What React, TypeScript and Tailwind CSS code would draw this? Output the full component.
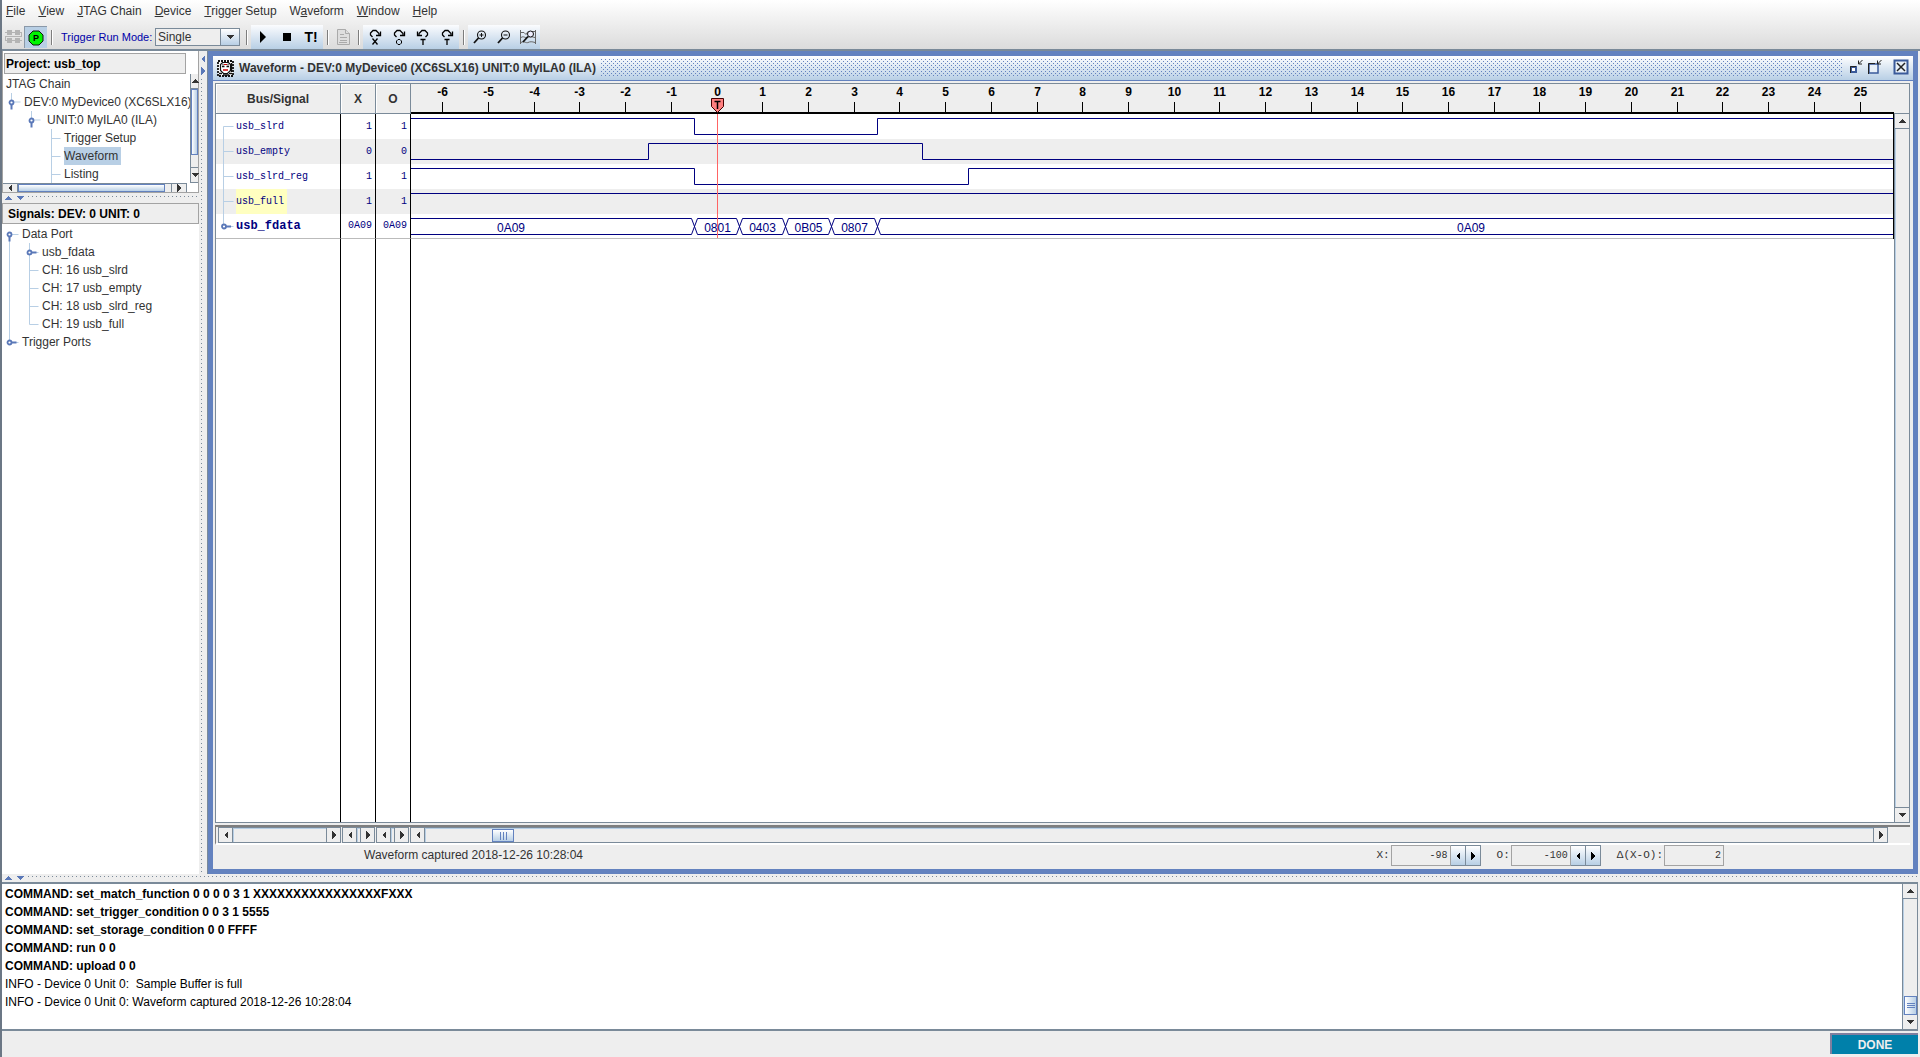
import type { ReactNode } from "react";

type Dir = "up" | "down" | "left" | "right";

const MENUS = [
  ["", "F", "ile"],
  ["", "V", "iew"],
  ["", "J", "TAG Chain"],
  ["", "D", "evice"],
  ["", "T", "rigger Setup"],
  ["W", "a", "veform"],
  ["", "W", "indow"],
  ["", "H", "elp"],
];

const SIGNALS = [
  { name: "usb_slrd", x: "1", o: "1" },
  { name: "usb_empty", x: "0", o: "0" },
  { name: "usb_slrd_reg", x: "1", o: "1" },
  { name: "usb_full", x: "1", o: "1" },
  { name: "usb_fdata", x: "0A09", o: "0A09" },
];

const COMMANDS = [
  "COMMAND: set_match_function 0 0 0 0 3 1 XXXXXXXXXXXXXXXXFXXX",
  "COMMAND: set_trigger_condition 0 0 3 1 5555",
  "COMMAND: set_storage_condition 0 0 FFFF",
  "COMMAND: run 0 0",
  "COMMAND: upload 0 0",
];

const INFOS = [
  "INFO - Device 0 Unit 0:  Sample Buffer is full",
  "INFO - Device 0 Unit 0: Waveform captured 2018-12-26 10:28:04",
];

const ARROWS: Record<Dir, string> = {
  up: "M0 6h8L4 2z",
  down: "M0 2h8L4 6z",
  left: "M6 0v8L2 4z",
  right: "M2 0v8l4-4z",
};

function Arrow({ dir, fill = "#333" }: { dir: Dir; fill?: string }) {
  return (
    <svg width="8" height="8" viewBox="0 0 8 8" className="shrink-0" shapeRendering="crispEdges">
      <path d={ARROWS[dir]} fill={fill} />
    </svg>
  );
}

/* ---------- scroll bars ---------- */

function ScrollButton({ dir, className }: { dir: Dir; className: string }) {
  return (
    <button
      aria-label={`Scroll ${dir}`}
      className={`flex shrink-0 items-center justify-center border-[#7a8a99] bg-[#eee] ${className}`}
    >
      <Arrow dir={dir} />
    </button>
  );
}

function HScroll({ className, children }: { className: string; children?: ReactNode }) {
  return (
    <div className={`flex h-4 border border-[#7a8a99] bg-[#eee] ${className}`}>
      <ScrollButton dir="left" className="w-[14px] border-r" />
      <div className="flex min-w-0 flex-1 border-l border-t border-[#b8cfe5]">{children}</div>
      <ScrollButton dir="right" className="w-[14px] border-l" />
    </div>
  );
}

/* ---------- tool bar ---------- */

function ToolSep() {
  return <div className="mx-1 h-[15px] w-px shrink-0 bg-[#7d7d7d] shadow-[1px_0_0_#fff]" />;
}

function ToolButton({ label, children }: { label: string; children: ReactNode }) {
  return (
    <button aria-label={label} className="flex h-6 w-6 items-center justify-center">
      {children}
    </button>
  );
}

function ToolGroup({ children }: { children: ReactNode }) {
  return (
    <div className="flex h-6 bg-gradient-to-b from-[#fbfcfe] to-[#b8cfe5]">{children}</div>
  );
}

function JumpIcon({ mark, flip }: { mark: "x" | "o" | "t"; flip?: boolean }) {
  return (
    <svg width="16" height="16" viewBox="0 0 16 16" fill="none" stroke="#000">
      <g transform={flip ? "matrix(-1 0 0 1 16 0)" : undefined}>
        <path d="M5.500 8L3.500 6V4L6 1.500h3L12 4.500V6" strokeWidth="1.300" />
        <path d="M13.500 2.500v4h-4.500" strokeWidth="1.300" />
      </g>
      {mark === "x" && <path d="M5.500 9.500l5 6M10.500 9.500l-5 6" strokeWidth="1.300" />}
      {mark === "o" && <path d="M7 10.500h2l1.500 1.500v2L9 15.500H7L5.500 14v-2z" />}
      {mark === "t" && <path d="M5.500 10.500h5M8 10.500V16" strokeWidth="1.300" />}
    </svg>
  );
}

function ZoomIcon({ plus }: { plus?: boolean }) {
  return (
    <svg width="14" height="14" viewBox="0 0 14 14" fill="none" stroke="#111">
      <circle cx="8.500" cy="5" r="4" strokeWidth="1.100" />
      <path d="M5.500 8L1 13" strokeWidth="1.800" />
      <path d={plus ? "M6.500 5h4M8.500 3v4" : "M6.500 5h4"} />
    </svg>
  );
}

function ToolBar() {
  return (
    <div className="flex h-[26px] items-start border-b-2 border-[#7a8a99]">
      <button aria-label="Open cable" className="flex h-6 w-[22px] items-center justify-center" disabled>
        <svg width="17" height="14" viewBox="0 0 17 14" fill="#b4b4b4">
          <path d="M2 0h5v5H2zM10 0h5v5h-5zM2 8h5v5H2zM10 8h5v5h-5zM0 2h17v1H0zM0 10h17v1H0zM16 2h1v5h-1zM0 6h17v1H0zM0 6h1v5H0z" />
        </svg>
      </button>
      <button
        aria-label="Poll"
        className="mt-px flex h-[22px] w-[23px] items-center justify-center border-l border-t border-[#8a98a8] bg-[#b8cfe5]"
      >
        <svg width="16" height="16" viewBox="0 0 16 16">
          <path d="M5 1h6l4 4v6l-4 4H5l-4-4V5z" fill="#00f500" stroke="#111" />
          <text x="8" y="11" textAnchor="middle" className="text-[9px] font-bold">P</text>
        </svg>
      </button>
      <div className="flex h-6 items-center">
        <ToolSep />
      </div>
      <div className="flex h-6 w-[186px] items-center">
        <label htmlFor="run-mode" className="w-[95px] whitespace-nowrap pl-[5px] text-[11px] text-[#0000aa]">
          Trigger Run Mode:
        </label>
        <div className="relative ml-1 h-[18px] w-[85px]">
          <select
            id="run-mode"
            className="block h-[18px] w-full appearance-none border border-[#7a8a99] bg-[#eee] pl-0.5 text-xs leading-4 outline-none"
          >
            <option>Single</option>
          </select>
          <span className="pointer-events-none absolute inset-y-0 right-0 flex w-5 items-center justify-center border border-[#7a8a99] bg-gradient-to-b from-white to-[#b8cfe5]">
            <Arrow dir="down" />
          </span>
        </div>
      </div>
      <div className="flex h-6 items-center">
        <ToolSep />
      </div>
      <ToolGroup>
        <ToolButton label="Run">
          <svg width="8" height="12" viewBox="0 0 8 12">
            <path d="M1 0l6 6-6 6z" fill="#000" />
          </svg>
        </ToolButton>
        <ToolButton label="Stop">
          <svg width="8" height="8" viewBox="0 0 8 8">
            <path d="M0 0h8v8H0z" fill="#000" />
          </svg>
        </ToolButton>
        <ToolButton label="Trigger immediate">
          <span className="text-sm font-bold text-black">T!</span>
        </ToolButton>
      </ToolGroup>
      <div className="flex h-6 items-center">
        <ToolSep />
        <button aria-label="Report" className="flex h-6 w-[22px] items-center justify-center" disabled>
          <svg width="13" height="16" viewBox="0 0 13 16" fill="#dedede" stroke="#aaa">
            <path d="M.5.5h8l4 4v11H.5z" />
            <path d="M8.500.5v4h4M3 5.500h4M3 8.500h7M3 11.500h7M2 13.500h8" />
          </svg>
        </button>
        <ToolSep />
      </div>
      <ToolGroup>
        <ToolButton label="Go to X marker">
          <JumpIcon mark="x" />
        </ToolButton>
        <ToolButton label="Go to O marker">
          <JumpIcon mark="o" />
        </ToolButton>
        <ToolButton label="Previous trigger">
          <JumpIcon mark="t" flip />
        </ToolButton>
        <ToolButton label="Next trigger">
          <JumpIcon mark="t" />
        </ToolButton>
      </ToolGroup>
      <div className="flex h-6 items-center">
        <ToolSep />
      </div>
      <ToolGroup>
        <ToolButton label="Zoom in">
          <ZoomIcon plus />
        </ToolButton>
        <ToolButton label="Zoom out">
          <ZoomIcon />
        </ToolButton>
        <ToolButton label="Zoom fit">
          <svg width="16" height="14" viewBox="0 0 16 14" fill="none" stroke="#666">
            <path d="M.5 0v14M15.500 0v14M1 2.500h3l2 2 2-3M1 7.500c3-2 4 1 6 0s4-1 8 0M1 12.500c3-2 5 1 7 0s4-1 7 0M12 1.500h3" />
            <circle cx="10.500" cy="4" r="3" fill="#eef" stroke="#111" />
            <path d="M8 6.500L3 12" stroke="#111" strokeWidth="1.800" />
          </svg>
        </ToolButton>
      </ToolGroup>
    </div>
  );
}

/* ---------- trees ---------- */

interface Node {
  label: string;
  gutter: string;
  lines: string;
  knob?: { x: number; open: boolean };
  selected?: boolean;
}

const PROJECT_TREE: Node[] = [
  { label: "JTAG Chain", gutter: "w-[3px]", lines: "" },
  { label: "DEV:0 MyDevice0 (XC6SLX16)", gutter: "w-[21px]", lines: "M8.500 0v9h9", knob: { x: 8.5, open: true } },
  { label: "UNIT:0 MyILA0 (ILA)", gutter: "w-[44px]", lines: "M28.500 0v9h9", knob: { x: 28.5, open: true } },
  { label: "Trigger Setup", gutter: "w-[61px]", lines: "M48.500 0v18M48.500 9.500h9" },
  { label: "Waveform", gutter: "w-[61px]", lines: "M48.500 0v18M48.500 9.500h9", selected: true },
  { label: "Listing", gutter: "w-[61px]", lines: "M48.500 0v18M48.500 9.500h9" },
];

const SIGNAL_TREE: Node[] = [
  { label: "Data Port", gutter: "w-5", lines: "M7.500 9v9M7.500 9.500h9", knob: { x: 7.5, open: true } },
  { label: "usb_fdata", gutter: "w-10", lines: "M7.500 0v18M27.500 0v18M27.500 9.500h9", knob: { x: 27.5, open: false } },
  { label: "CH: 16 usb_slrd", gutter: "w-10", lines: "M7.500 0v18M27.500 0v18M27.500 9.500h9" },
  { label: "CH: 17 usb_empty", gutter: "w-10", lines: "M7.500 0v18M27.500 0v18M27.500 9.500h9" },
  { label: "CH: 18 usb_slrd_reg", gutter: "w-10", lines: "M7.500 0v18M27.500 0v18M27.500 9.500h9" },
  { label: "CH: 19 usb_full", gutter: "w-10", lines: "M7.500 0v18M27.500 0v9.500h9" },
  { label: "Trigger Ports", gutter: "w-5", lines: "M7.500 0v9.500h9", knob: { x: 7.5, open: false } },
];

function Knob({ x, y, open }: { x: number; y: number; open: boolean }) {
  return (
    <g>
      <path
        d={open ? `M${x} ${y + 2}v5` : `M${x + 2} ${y}h5`}
        stroke="#5a78b8"
        strokeWidth="2"
      />
      <circle cx={x} cy={y} r="2" fill="#fff" stroke="#5a78b8" strokeWidth="1.800" />
    </g>
  );
}

function TreeRow({ node }: { node: Node }) {
  return (
    <li className="flex h-[18px] items-center whitespace-nowrap">
      <svg className={`h-[18px] shrink-0 ${node.gutter}`}>
        <path d={node.lines} fill="none" stroke="#b8cfe5" />
        {node.knob && <Knob x={node.knob.x} y={9.5} open={node.knob.open} />}
      </svg>
      <span className={node.selected ? "bg-[#b8cfe5] pr-[3px] leading-[18px]" : ""}>
        {node.label}
      </span>
    </li>
  );
}

const DOTS_X =
  "bg-[conic-gradient(from_270deg_at_1px_1px,#7a8a99_25%,transparent_0)] bg-[length:4px_4px]";

function SideBar() {
  return (
    <aside className="flex w-[197px] shrink-0 flex-col">
      <div className="flex h-[142px] flex-col border border-t-0 border-[#a3a3a3] bg-white">
        <h2 className="ml-px mt-0.5 flex h-[21px] w-[182px] shrink-0 items-center border border-[#a3a3a3] bg-[#eee] pl-px font-bold text-black">
          Project: usb_top
        </h2>
        <div className="flex min-h-0 flex-1">
          <ul className="min-w-0 flex-1 overflow-hidden pt-px">
            {PROJECT_TREE.map((n) => (
              <TreeRow key={n.label} node={n} />
            ))}
          </ul>
          <div className="flex w-2 flex-col border-l border-[#7a8a99] bg-[#eee]">
            <ScrollButton dir="up" className="h-[15px] border-b" />
            <div className="flex-1">
              <div className="h-[66px] border border-[#6382bf] bg-gradient-to-r from-white to-[#b8cfe5]" />
            </div>
            <ScrollButton dir="down" className="h-4 border-y" />
          </div>
        </div>
        <div className="mr-[11px] flex h-[9px] shrink-0 border-t border-[#7a8a99] bg-[#eee]">
          <ScrollButton dir="left" className="w-[15px] border-r" />
          <div className="flex-1">
            <div className="h-full w-[147px] border border-[#6382bf] bg-gradient-to-b from-white to-[#b8cfe5]" />
          </div>
          <ScrollButton dir="right" className="w-4 border-x" />
        </div>
      </div>
      <div className="flex h-[10px] shrink-0 items-center gap-1 bg-[#eee] pl-0.5">
        <Arrow dir="up" fill="#5a78b8" />
        <Arrow dir="down" fill="#5a78b8" />
        <div className={`h-1 flex-1 ${DOTS_X}`} />
      </div>
      <section className="flex-1 bg-white">
        <h2 className="flex h-[21px] items-center border border-[#a3a3a3] bg-[#eee] pl-[5px] font-bold text-black">
          Signals: DEV: 0 UNIT: 0
        </h2>
        <ul className="mt-px">
          {SIGNAL_TREE.map((n) => (
            <TreeRow key={n.label} node={n} />
          ))}
        </ul>
      </section>
    </aside>
  );
}

/* ---------- waveform chart ---------- */

const ORIGIN = 305.5; // x of sample 0
const at = (n: number) => Math.round(ORIGIN + n * 45.72) + 0.5;
const END = 4000;

const TRACES = [
  `M0 4.500H${at(-0.5)}v16H${at(3.5)}v-16H${END}`,
  `M0 45.500H${at(-1.5)}v-16H${at(4.5)}v16H${END}`,
  `M0 54.500H${at(-0.5)}v16H${at(5.5)}v-16H${END}`,
  `M0 79.500H${END}`,
];

// bus cells: [from, to, value]
const CELLS: [number, number, string][] = [
  [-0.5, 0.5, "0801"],
  [0.5, 1.5, "0403"],
  [1.5, 2.5, "0B05"],
  [2.5, 3.5, "0807"],
];

function Ruler() {
  const ticks = Array.from({ length: 32 }, (_, i) => i - 6);
  return (
    <svg className="block h-[30px] w-full bg-[#eee]">
      {ticks.map((n) => (
        <g key={n}>
          {n !== 0 && <path d={`M${at(n)} 18v10`} stroke="#000" />}
          <text x={at(n)} y="12" textAnchor="middle" className="fill-black text-xs font-bold">
            {n}
          </text>
        </g>
      ))}
      <path d={`M0 29h${END}`} stroke="#000" strokeWidth="2" />
      <path d={`M${at(0) - 6} 14.500h12v8l-6 6l-6-6z`} fill="#ff8080" stroke="#400" />
      <path d={`M${at(0) - 3} 17.500h6M${at(0)} 17v8`} stroke="#000" strokeWidth="1.500" />
    </svg>
  );
}

function Chart() {
  return (
    <svg className="block h-[125px] w-full fill-none stroke-[#000080]">
      <path d={`M0 25h${END}v25H0zM0 75h${END}v25H0z`} fill="#eee" stroke="none" />
      {TRACES.map((d) => (
        <path key={d} d={d} />
      ))}
      <path d={`M0 104.500H${at(-0.5) - 3}l6 16M0 120.500H${at(-0.5) - 3}l6-16`} />
      {CELLS.map(([a, b, value]) => (
        <g key={value}>
          <path d={`M${at(a) + 3} 104.500H${at(b) - 3}l6 16M${at(a) + 3} 120.500H${at(b) - 3}l6-16`} />
          <text x={at((a + b) / 2)} y="118" textAnchor="middle" className="fill-[#000080] stroke-none text-xs">
            {value}
          </text>
        </g>
      ))}
      <path d={`M${at(3.5) + 3} 104.500H${END}M${at(3.5) + 3} 120.500H${END}`} />
      <g className="fill-[#000080] stroke-none text-xs">
        <text x="86" y="118">0A09</text>
        <text x="1046" y="118">0A09</text>
      </g>
      <path d={`M${at(0)} 0v124`} stroke="#ff6464" />
      <path d={`M0 124.500h${END}`} stroke="#bbb" />
    </svg>
  );
}

function SignalTable() {
  return (
    <div className="flex w-[195px] shrink-0 flex-col">
      <table className="w-full table-fixed border-separate border-spacing-0">
        <colgroup>
          <col className="w-[125px]" />
          <col className="w-[35px]" />
          <col className="w-[35px]" />
        </colgroup>
        <thead>
          <tr className="h-[30px] bg-[#eee]">
            {["Bus/Signal", "X", "O"].map((h) => (
              <th key={h} className="border-b border-r border-[#7a8a99] p-0 shadow-[inset_1px_1px_0_#fff]">
                {h}
              </th>
            ))}
          </tr>
        </thead>
        <tbody className="font-['Liberation_Mono',monospace] text-[10px] text-[#000080]">
          {SIGNALS.map((s, i) => {
            const last = i === SIGNALS.length - 1;
            const line = last ? "border-b border-b-[#bbb]" : "";
            return (
              <tr key={s.name} className={`h-[25px] ${i % 2 ? "bg-[#eee]" : ""}`}>
                <td className={`border-r border-r-black p-0 ${line}`}>
                  <div className="flex h-6 items-center">
                    <svg className="h-[25px] w-5 shrink-0">
                      <path
                        d={i === 0 ? "M7.500 25V12.500h10" : last ? "M7.500 0v12.500h10" : "M7.500 0v25M7.500 12.500h10"}
                        fill="none"
                        stroke="#b8cfe5"
                      />
                      {last && <Knob x={8} y={12.5} open={false} />}
                    </svg>
                    <span
                      className={
                        last
                          ? "text-xs font-bold"
                          : s.name === "usb_full"
                            ? "bg-[#ffffc0] pr-[3px] leading-[25px]"
                            : ""
                      }
                    >
                      {s.name}
                    </span>
                  </div>
                </td>
                <td className={`border-r border-r-black p-0 pr-[3px] text-right ${line}`}>{s.x}</td>
                <td className={`border-r border-r-black p-0 pr-[3px] text-right ${line}`}>{s.o}</td>
              </tr>
            );
          })}
        </tbody>
      </table>
      {/* column rules run on down the empty area */}
      <div className="grid flex-1 grid-cols-[125px_35px_35px]">
        <div className="border-r border-black" />
        <div className="border-r border-black" />
        <div className="border-r border-black" />
      </div>
    </div>
  );
}

function Stepper({ id, label, value }: { id: string; label: string; value: string }) {
  return (
    <div className="flex items-center">
      <label htmlFor={id} className="mr-px font-['Liberation_Mono',monospace] text-[11px]">
        {label}
      </label>
      <input
        id={id}
        readOnly
        defaultValue={value}
        className="h-[21px] w-[60px] border border-[#a3a3a3] bg-[#eee] pr-0.5 text-right font-['Liberation_Mono',monospace] text-[10px] outline-none"
      />
      {id !== "delta" &&
        (["left", "right"] as Dir[]).map((dir) => (
          <button
            key={dir}
            aria-label={`Move ${label} ${dir}`}
            className="flex h-[21px] w-[15px] items-center justify-center border border-l-0 border-[#7a8a99] bg-gradient-to-b from-white to-[#b8cfe5]"
          >
            <Arrow dir={dir} fill="#000" />
          </button>
        ))}
    </div>
  );
}

function TitleBar() {
  return (
    <div className="flex h-[25px] items-center border-b border-[#6382bf] bg-gradient-to-b from-white to-[#b8cfe5] pl-1">
      <svg width="17" height="17" viewBox="0 0 17 17" fill="none" stroke="#111">
        <rect x="1" y="1" width="15" height="15" fill="#fff" strokeDasharray="2 1" strokeWidth="1.800" />
        <path d="M5.500 2.500h6l2 2v6l-3 3h-4l-3-3v-6z" strokeWidth="1.200" />
        <path d="M5 6.500h2.500M9.500 6.500H12M5.500 4.500h1M10.500 4.500h1" strokeWidth="1.500" />
        <path d="M6 10h5" stroke="#d00000" strokeWidth="1.500" />
        <path d="M7 4.500h3" stroke="#d00000" />
        <path d="M2 13.500h3M12 13.500h3M6 15h6M14.500 3v9" strokeWidth="1.500" />
      </svg>
      <h1 className="ml-[5px] whitespace-nowrap font-bold">
        Waveform - DEV:0 MyDevice0 (XC6SLX16) UNIT:0 MyILA0 (ILA)
      </h1>
      <div className="ml-[5px] mr-1.5 h-[18px] flex-1 bg-[conic-gradient(from_270deg_at_1px_1px,#6382bf_25%,transparent_0),conic-gradient(from_270deg_at_1px_1px,#6382bf_25%,transparent_0)] bg-[length:4px_4px] bg-[position:0_0,2px_2px]" />
      <div className="flex items-center pb-0.5 pr-1">
        <button aria-label="Minimize">
          <svg width="16" height="16" viewBox="0 0 16 16" fill="none" stroke="#222">
            <path d="M2 8h5v5H2z" fill="#fff" stroke="#3a5a9a" strokeWidth="2" />
            <path d="M1.500 14V7.500H7" />
            <path d="M13.500 1L9.500 5M9.500 1.500v3.500H13" />
          </svg>
        </button>
        <button aria-label="Maximize" className="ml-0.5">
          <svg width="16" height="16" viewBox="0 0 16 16" fill="none" stroke="#222">
            <path d="M2 5h9v9H2z" fill="#e8f0f8" stroke="#3a5a9a" strokeWidth="1.500" />
            <path d="M1.500 15V4.500H8" />
            <path d="M14.500 1L10.500 5M10.500 1.500v3.500H14" />
          </svg>
        </button>
        <button aria-label="Close" className="ml-2.5">
          <svg width="16" height="16" viewBox="0 0 16 16" fill="none" stroke="#222">
            <path d="M1.500 1.500h13v13h-13z" fill="#e8f0f8" stroke="#3a5a9a" strokeWidth="2" />
            <path d="M4 4l8 8M12 4l-8 8" strokeWidth="1.500" />
          </svg>
        </button>
      </div>
    </div>
  );
}

function WaveWindow() {
  return (
    <section className="mr-0.5 flex min-w-0 flex-1 flex-col border-[5px] border-[#6382bf] bg-[#eee]">
      <TitleBar />
      <div className="ml-0.5 mr-[3px] mt-0.5 flex min-h-0 flex-1 border border-[#7a8a99] bg-white">
        <SignalTable />
        <div className="min-w-0 flex-1">
          <Ruler />
          <div className="border-r border-black">
            <Chart />
          </div>
        </div>
        <div className="flex w-[15px] shrink-0 flex-col bg-[#eee]">
          <div className="h-[29px]" />
          <div className="flex flex-1 flex-col border-l border-t border-[#7a8a99]">
            <ScrollButton dir="up" className="h-[15px] border-b" />
            <div className="flex-1 border-l border-[#b8cfe5]" />
            <ScrollButton dir="down" className="h-[15px] border-t" />
          </div>
        </div>
      </div>
      <div className="ml-0.5 mr-[3px] mt-0.5 flex h-5 shrink-0 items-start gap-px border-l border-t-2 border-[#7f7f7f] border-b-2 border-b-white bg-[#eee] pl-0.5 pr-[22px]">
        <HScroll className="w-[123px]" />
        <HScroll className="w-[33px]" />
        <HScroll className="w-[33px]" />
        <HScroll className="min-w-0 flex-1">
          <div className="ml-[66px] flex w-[22px] items-center justify-center gap-0.5 border border-[#6382bf] bg-gradient-to-b from-white to-[#b8cfe5]">
            <span className="h-2 w-px bg-[#6382bf]" />
            <span className="h-2 w-px bg-[#6382bf]" />
            <span className="h-2 w-px bg-[#6382bf]" />
          </div>
        </HScroll>
      </div>
      <div className="flex h-6 shrink-0 items-start justify-between pl-[151px] pr-[189px]">
        <p className="leading-[21px]">Waveform captured 2018-12-26 10:28:04</p>
        <div className="flex gap-4">
          <Stepper id="cursor-x" label="X:" value="-98" />
          <Stepper id="cursor-o" label="O:" value="-100" />
          <Stepper id="delta" label="Δ(X-O):" value="2" />
        </div>
      </div>
    </section>
  );
}

/* ---------- console ---------- */

function Console() {
  return (
    <div className="mr-0.5 flex h-[149px] shrink-0 border-y-2 border-[#7a8a99] bg-white">
      <div className="min-w-0 flex-1 whitespace-pre pl-[3px] pt-px leading-[18px] text-black">
        {COMMANDS.map((c) => (
          <p key={c} className="font-bold">{c}</p>
        ))}
        {INFOS.map((c) => (
          <p key={c}>{c}</p>
        ))}
      </div>
      <div className="flex w-4 flex-col border-x border-[#7a8a99] bg-[#eee]">
        <ScrollButton dir="up" className="h-[15px] border-b" />
        <div className="flex flex-1 flex-col justify-end border-l border-[#b8cfe5]">
          <div className="flex h-[19px] flex-col items-center justify-center gap-px border border-[#6382bf] bg-gradient-to-r from-white to-[#b8cfe5]">
            <span className="h-px w-2 bg-[#6382bf]" />
            <span className="h-px w-2 bg-[#6382bf]" />
            <span className="h-px w-2 bg-[#6382bf]" />
          </div>
        </div>
        <ScrollButton dir="down" className="h-[14px]" />
      </div>
    </div>
  );
}

export default function App() {
  return (
    <div className="flex h-screen flex-col overflow-hidden border-l-2 border-[#6b7785] bg-[#eee] font-['Liberation_Sans',Arial,sans-serif] text-xs text-[#333]">
      <header className="shrink-0 bg-gradient-to-b from-white to-[#dadada]">
        <nav className="flex h-[25px] items-center gap-[13px] pb-[3px] pl-1">
          {MENUS.map(([pre, key, post]) => (
            <button key={key + post}>
              {pre}
              <span className="underline">{key}</span>
              {post}
            </button>
          ))}
        </nav>
        <ToolBar />
      </header>
      <main className="flex min-h-0 flex-1">
        <SideBar />
        <div className="flex w-[9px] shrink-0 flex-col items-center gap-1 border-r border-[#7a8a99] pt-1">
          <Arrow dir="left" fill="#5a78b8" />
          <Arrow dir="right" fill="#5a78b8" />
          <div className={`w-1 flex-1 ${DOTS_X}`} />
        </div>
        <WaveWindow />
      </main>
      <div className="flex h-2 shrink-0 items-center gap-1 pl-0.5">
        <Arrow dir="up" fill="#5a78b8" />
        <Arrow dir="down" fill="#5a78b8" />
        <div className={`h-1 flex-1 ${DOTS_X}`} />
      </div>
      <Console />
      <footer className="flex h-[26px] shrink-0 justify-end">
        <div className="mb-[3px] mr-0.5 mt-0.5 flex w-[88px] items-center justify-center border-l-2 border-t-2 border-[#7f7f9f] bg-[#0080aa] font-bold text-[#eee]">
          DONE
        </div>
      </footer>
    </div>
  );
}
